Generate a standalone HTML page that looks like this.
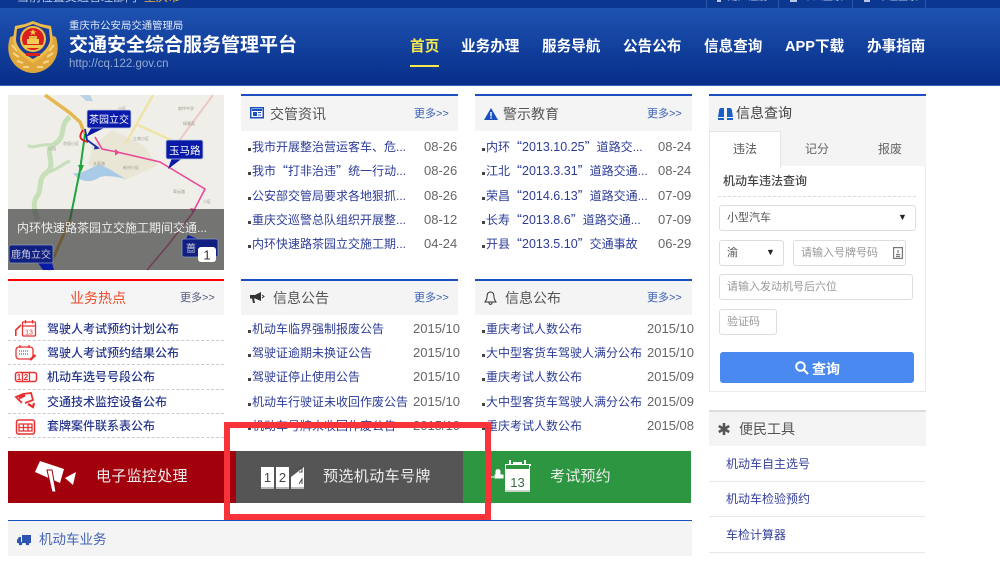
<!DOCTYPE html>
<html lang="zh-CN">
<head>
<meta charset="utf-8">
<title>交通安全综合服务管理平台</title>
<style>
html,body{margin:0;padding:0;background:#fff}
body{width:1000px;height:562px;overflow:hidden;position:relative;font-family:"Liberation Sans","Noto Sans CJK SC",sans-serif;font-size:12px;color:#333;filter:blur(.3px)}
.a{position:absolute;white-space:nowrap}
svg{position:absolute;overflow:visible}
.hd{position:absolute;width:217px;height:35px;background:#f4f4f4}
.ln{position:absolute;height:2px;background:#1a4fc0}
.t{position:absolute;font-size:14px;line-height:20px;color:#555;white-space:nowrap}
.m{position:absolute;font-size:11px;line-height:14px;color:#3d62b5;white-space:nowrap}
.r{position:absolute;font-size:12px;line-height:18px;color:#2d3c97;white-space:nowrap}
.r:before{content:"";position:absolute;left:-4px;top:10px;width:3px;height:3px;background:#444}
.q{font-family:"Noto Sans CJK SC",sans-serif}
.n{font-size:12.5px}
.d{position:absolute;font-size:13px;line-height:18px;color:#666;white-space:nowrap}
.h{position:absolute;left:47px;font-size:12px;line-height:18px;color:#26358c;font-weight:500;white-space:nowrap}
.ds{position:absolute;left:8px;width:216px;border-top:1px dashed #ccc}
.nav{position:absolute;top:37px;font-size:14.6px;line-height:20px;font-weight:700;color:#fff;white-space:nowrap}
.bx{position:absolute;border:1px solid #ddd;border-radius:3px;box-sizing:border-box;background:#fff;color:#999;font-size:11px;line-height:24px;padding-left:7px;white-space:nowrap}
.tool{position:absolute;left:726px;font-size:12px;line-height:16px;color:#35409a;white-space:nowrap}
.tl{position:absolute;left:709px;width:216px;height:1px;background:#e8e8e8}
.bn{position:absolute;top:451px;height:52px}
.bt{position:absolute;font-size:15px;line-height:20px;color:#eee;white-space:nowrap}
</style>
</head>
<body>
<!-- top bar + header -->
<div class="a" style="left:0;top:0;width:1000px;height:8px;background:#0c3790;overflow:hidden">
  <div class="a" style="left:17px;top:-11px;font-size:12px;line-height:16px;color:#b9c7e6">当前位置交通管理部门<span style="color:#f3b53a;margin-left:7px">重庆市</span></div>
  <div class="a" style="left:706px;top:0;width:1px;height:8px;background:#2c56a8"></div>
  <div class="a" style="left:778px;top:0;width:1px;height:8px;background:#2c56a8"></div>
  <div class="a" style="left:852px;top:0;width:1px;height:8px;background:#2c56a8"></div>
  <div class="a" style="left:925px;top:0;width:1px;height:8px;background:#2c56a8"></div>
  <div class="a" style="left:717px;top:0;width:4px;height:2px;background:#b9c7e6"></div>
  <div class="a" style="left:790px;top:0;width:7px;height:2px;background:#b9c7e6"></div>
  <div class="a" style="left:864px;top:0;width:6px;height:2px;background:#b9c7e6"></div>
  <div class="a" style="left:728px;top:-10px;font-size:10px;line-height:16px;color:#b9c7e6">用户注册</div>
  <div class="a" style="left:803px;top:-10px;font-size:10px;line-height:16px;color:#b9c7e6">个人登录</div>
  <div class="a" style="left:878px;top:-10px;font-size:10px;line-height:16px;color:#b9c7e6">单位登录</div>
</div>
<div class="a" style="left:0;top:8px;width:1000px;height:77px;background:linear-gradient(#1e52b2,#072e88)"></div>
<div class="a" style="left:0;top:85px;width:1000px;height:1px;background:#3b66b8"></div>

<!-- emblem -->
<svg style="left:8px;top:21px" width="50" height="52" viewBox="0 0 50 52">
  <path d="M25 52C17 52 8 47 4 40C0 34 -1 26 2 16L8 14L25 30L42 14L48 16C51 26 50 34 46 40C42 47 33 52 25 52Z" fill="#dfa63c"/>
  <path d="M4 24L9 30M5 32L11 36M9 40L15 42M15 46L21 46M46 24L41 30M45 32L39 36M41 40L35 42M35 46L29 46" stroke="#f4d685" stroke-width="2"/>
  <path d="M25 0L33 3L43 5L45 18C45 28 36 36 25 42C14 36 5 28 5 18L7 5L17 3Z" fill="#ecbb48"/>
  <path d="M25 3L33 6L41 8L42 18C42 26 34 33 25 38C16 33 8 26 8 18L9 8L17 6Z" fill="#1c3c9c"/>
  <circle cx="25" cy="18" r="13" fill="#edc04a"/>
  <circle cx="25" cy="18" r="11" fill="#d8201e"/>
  <path d="M25 8l1 2.400h2.400l-2 1.500.8 2.400-2.200-1.500-2.200 1.500.8-2.400-2-1.500h2.400z" fill="#f5d34a"/>
  <rect x="19" y="18" width="12" height="5" fill="#f3cd55"/>
  <rect x="21" y="15" width="8" height="3" fill="#eab93f"/>
  <rect x="16" y="24" width="18" height="3" fill="#f0c84e"/>
  <rect x="18" y="32" width="14" height="3" fill="#d8201e"/>
</svg>

<div class="a" style="left:69px;top:19px;font-size:10.4px;line-height:16px;color:#dfe8f7">重庆市公安局交通管理局</div>
<div class="a" style="left:69px;top:33px;font-size:19px;line-height:26px;font-weight:700;color:#fff">交通安全综合服务管理平台</div>
<div class="a" style="left:69px;top:57px;font-size:11.500px;line-height:15px;color:#94a9d2">http://cq.122.gov.cn</div>

<div class="nav" style="left:410px;color:#f7e84e">首页</div>
<div class="a" style="left:410px;top:65px;width:29px;height:2px;background:#f7e84e"></div>
<div class="nav" style="left:461px">业务办理</div>
<div class="nav" style="left:542px">服务导航</div>
<div class="nav" style="left:623px">公告公布</div>
<div class="nav" style="left:704px">信息查询</div>
<div class="nav" style="left:785px">APP下载</div>
<div class="nav" style="left:867px">办事指南</div>

<!-- map -->
<svg style="left:8px;top:95px" width="216" height="175" viewBox="0 0 216 175">
  <rect width="216" height="175" fill="#efeee8"/>
  <path d="M105 35L135 50L150 70L118 85L80 70L85 50Z" fill="#e9e6d6"/>
  <path d="M62 22C50 30 60 42 45 50C35 55 50 70 38 78C30 84 34 92 30 100C25 105 25 115 30 125" fill="none" stroke="#c5dfb9" stroke-width="5"/>
  <path d="M45 50C30 48 25 55 20 50M38 78C50 75 55 68 62 66" fill="none" stroke="#c5dfb9" stroke-width="3"/>
  <path d="M72 0L82 0L85 6L78 6Z" fill="#b9d3e6"/>
  <path d="M65 78C75 80 85 70 92 70C100 72 110 80 118 84C108 82 100 80 92 82C84 88 72 88 65 78Z" fill="#a9cbe8"/>
  <path d="M37 0L62 18L72 27L77 39" fill="none" stroke="#e4b751" stroke-width="3.500"/>
  <path d="M118 48L145 0M130 30L165 46" fill="none" stroke="#f0e3a8" stroke-width="2.500"/>
  <path d="M168 50L205 0" fill="none" stroke="#edc7c4" stroke-width="2"/>
  <path d="M62 125L40 175" fill="none" stroke="#d9a53a" stroke-width="3"/>
  <g fill="#9a9a8f" font-size="4" font-family="Liberation Sans,Noto Sans CJK SC,sans-serif">
    <text x="85" y="70">长寿路</text><text x="115" y="74">新村小区</text><text x="55" y="50">花园小区</text><text x="165" y="98">翠云路</text><text x="125" y="45">江南小区</text><text x="170" y="15">南坪中学</text><text x="175" y="30">绿景苑</text><text x="40" y="55">公园</text><text x="110" y="15">小区</text><text x="195" y="108">小区</text>
  </g>
  <path d="M77 39L72 75L62 125" fill="none" stroke="#1da73a" stroke-width="2"/>
  <path d="M70 70l3 7 3-7z" fill="#1da73a"/>
  <path d="M75 35C70 42 72 45 80 47" fill="none" stroke="#e01818" stroke-width="1.800"/>
  <path d="M77 34L79 45L90 53" fill="none" stroke="#1c2ba8" stroke-width="1.800"/>
  <path d="M87 50l5 3.500-6 1z" fill="#1c2ba8"/>
  <path d="M87 42L94 54L109 57L152 67L197 94L184 119L160 150L139 175" fill="none" stroke="#e84a98" stroke-width="1.600"/>
  <path d="M107 54l5 3.500-5 3z M182 113l3 6 3-5z" fill="#e84a98"/>
  <rect y="114" width="216" height="61" fill="#3a3a3a" fill-opacity=".68"/>
  <path d="M85 30L78 42L96 33Z M165 60L160 74L176 62Z" fill="#0a1aa8"/>
  <rect x="79" y="15" width="44" height="18" rx="2" fill="#0a1aa8" stroke="#bcd" stroke-width=".8"/>
  <text x="81" y="28" font-size="10" fill="#fff" font-family="Liberation Sans,Noto Sans CJK SC,sans-serif">茶园立交</text>
  <rect x="158" y="45" width="37" height="19" rx="2" fill="#0a1aa8" stroke="#bcd" stroke-width=".8"/>
  <text x="161" y="59" font-size="10.500" fill="#fff" font-family="Liberation Sans,Noto Sans CJK SC,sans-serif">玉马路</text>
  <path d="M30 168L35 175H46L44 168Z M180 140L178 144H190Z" fill="#0a1aa8"/>
  <rect x="1" y="150" width="44" height="18" rx="2" fill="#101f80" stroke="#8899bb" stroke-width=".8"/>
  <text x="3" y="163" font-size="10" fill="#ccd" font-family="Liberation Sans,Noto Sans CJK SC,sans-serif">鹿角立交</text>
  <rect x="174" y="144" width="36" height="18" rx="2" fill="#101f80" stroke="#8899bb" stroke-width=".8"/>
  <text x="178" y="157" font-size="10" fill="#ccd" font-family="Liberation Sans,Noto Sans CJK SC,sans-serif">蔷</text>
  <rect x="190" y="152" width="18" height="15" rx="3" fill="#fff"/>
  <text x="199" y="164.500" font-size="13" text-anchor="middle" fill="#333" font-family="Liberation Sans,sans-serif">1</text>
</svg>
<div class="a" style="left:17px;top:219px;font-size:12px;line-height:18px;color:#eee">内环快速路茶园立交施工期间交通...</div>

<!-- hot list -->
<div class="a" style="left:8px;top:281px;width:216px;height:34px;background:#f5f5f5"></div>
<div class="a" style="left:8px;top:279px;width:216px;height:2px;background:#f00"></div>
<div class="a" style="left:70px;top:288px;font-size:14px;line-height:20px;color:#f0482a">业务热点</div>
<div class="m" style="left:180px;top:291px;color:#555c80">更多&gt;&gt;</div>
<svg style="left:15px;top:319px" width="22" height="118" viewBox="0 0 22 118" fill="none" stroke="#e83232" stroke-width="1.300">
  <rect x="7.500" y="3" width="13" height="14" rx="1"/><path d="M7.500 7H20.500M10.500 1V4.500M17.500 1V4.500"/><path d="M0.800 17V11L6 6" stroke-width="1.600"/>
  <text x="14" y="15.500" font-size="7" fill="#e83232" stroke="none" text-anchor="middle" font-family="Liberation Sans,sans-serif">13</text>
  <rect x="1" y="28" width="17" height="12" rx="3"/><path d="M5 26V29M14 26V29"/><path d="M4 32H14M4 35H14" stroke-dasharray="1 1"/><path d="M15 41L20.500 36" stroke-width="2.500"/>
  <rect x="0.500" y="53.500" width="21" height="9" rx="2" stroke-width="1.500"/><path d="M7.500 54V62M14.500 54V62"/>
  <g font-size="8" fill="#e83232" stroke="none" text-anchor="middle" font-family="Liberation Sans,sans-serif" font-weight="700"><text x="4" y="61">1</text><text x="11" y="61">2</text></g>
  <path d="M7 84L1 78L8 75M8 75L16 74L18 81L10 84" stroke-width="1.800"/><path d="M13 85L18 88L19 84" stroke-width="2.200"/><path d="M4 79L10 76" stroke-width="3"/>
  <rect x="1.500" y="101" width="18" height="14" rx="2" stroke-width="1.500"/><path d="M4 105H17V112H4ZM8.500 105V112M13 105V112M4 108.500H17"/>
</svg>
<div class="h" style="top:320px">驾驶人考试预约计划公布</div>
<div class="h" style="top:344px">驾驶人考试预约结果公布</div>
<div class="h" style="top:368px">机动车选号号段公布</div>
<div class="h" style="top:393px">交通技术监控设备公布</div>
<div class="h" style="top:417px">套牌案件联系表公布</div>
<div class="ds" style="top:340px"></div>
<div class="ds" style="top:364px"></div>
<div class="ds" style="top:389px"></div>
<div class="ds" style="top:413px"></div>
<div class="ds" style="top:437px"></div>

<!-- panel: 交管资讯 -->
<div class="hd" style="left:241px;top:96px"></div>
<div class="ln" style="left:241px;top:94px;width:217px"></div>
<svg style="left:250px;top:107px" width="14" height="12" viewBox="0 0 14 12"><rect x=".75" y=".75" width="12.500" height="10" fill="#fff" stroke="#1a4fc0" stroke-width="1.500"/><rect x="2" y="2" width="10" height="2" fill="#1a4fc0"/><rect x="3" y="5" width="4" height="4" fill="#1a4fc0"/><rect x="8" y="5" width="3" height="1" fill="#1a4fc0"/><rect x="8" y="7.500" width="3" height="1" fill="#1a4fc0"/></svg>
<div class="t" style="left:270px;top:104px">交管资讯</div>
<div class="m" style="left:414px;top:107px">更多&gt;&gt;</div>
<div class="r" style="left:252px;top:138px">我市开展整治营运客车、危...</div><div class="d" style="left:424px;top:138px">08-26</div>
<div class="r" style="left:252px;top:162px">我市<span class="q">“</span>打非治违<span class="q">”</span>统一行动...</div><div class="d" style="left:424px;top:162px">08-26</div>
<div class="r" style="left:252px;top:187px">公安部交管局要求各地狠抓...</div><div class="d" style="left:424px;top:187px">08-26</div>
<div class="r" style="left:252px;top:211px">重庆交巡警总队组织开展整...</div><div class="d" style="left:424px;top:211px">08-12</div>
<div class="r" style="left:252px;top:235px">内环快速路茶园立交施工期...</div><div class="d" style="left:424px;top:235px">04-24</div>

<!-- panel: 警示教育 -->
<div class="hd" style="left:475px;top:96px"></div>
<div class="ln" style="left:475px;top:94px;width:217px"></div>
<svg style="left:484px;top:108px" width="14" height="12" viewBox="0 0 14 12"><path d="M7 0L14 12H0Z" fill="#1a4fc0"/><rect x="6.300" y="4" width="1.400" height="4.500" fill="#fff"/><rect x="6.300" y="9.300" width="1.400" height="1.400" fill="#fff"/></svg>
<div class="t" style="left:503px;top:104px">警示教育</div>
<div class="m" style="left:647px;top:107px">更多&gt;&gt;</div>
<div class="r" style="left:486px;top:138px">内环<span class="q">“</span><span class="n">2013.10.25</span><span class="q">”</span>道路交...</div><div class="d" style="left:658px;top:138px">08-24</div>
<div class="r" style="left:486px;top:162px">江北<span class="q">“</span><span class="n">2013.3.31</span><span class="q">”</span>道路交通...</div><div class="d" style="left:658px;top:162px">08-24</div>
<div class="r" style="left:486px;top:187px">荣昌<span class="q">“</span><span class="n">2014.6.13</span><span class="q">”</span>道路交通...</div><div class="d" style="left:658px;top:187px">07-09</div>
<div class="r" style="left:486px;top:211px">长寿<span class="q">“</span><span class="n">2013.8.6</span><span class="q">”</span>道路交通...</div><div class="d" style="left:658px;top:211px">07-09</div>
<div class="r" style="left:486px;top:235px">开县<span class="q">“</span><span class="n">2013.5.10</span><span class="q">”</span>交通事故</div><div class="d" style="left:658px;top:235px">06-29</div>

<!-- panel: 信息公告 -->
<div class="hd" style="left:241px;top:281px;height:34px"></div>
<div class="ln" style="left:241px;top:279px;width:217px"></div>
<svg style="left:250px;top:292px" width="14" height="12" viewBox="0 0 14 12"><path d="M0 3H5L11 0V9L5 6.500H4L5 11H3L2 6.500H0Z" fill="#333"/><path d="M12 3L14 4.500L12 6" fill="none" stroke="#333"/></svg>
<div class="t" style="left:273px;top:288px">信息公告</div>
<div class="m" style="left:414px;top:291px">更多&gt;&gt;</div>
<div class="r" style="left:252px;top:320px">机动车临界强制报废公告</div><div class="d" style="left:413px;top:320px">2015/10</div>
<div class="r" style="left:252px;top:344px">驾驶证逾期未换证公告</div><div class="d" style="left:413px;top:344px">2015/10</div>
<div class="r" style="left:252px;top:368px">驾驶证停止使用公告</div><div class="d" style="left:413px;top:368px">2015/10</div>
<div class="r" style="left:252px;top:393px">机动车行驶证未收回作废公告</div><div class="d" style="left:413px;top:393px">2015/10</div>
<div class="r" style="left:252px;top:417px">机动车号牌未收回作废公告</div><div class="d" style="left:413px;top:417px">2015/10</div>

<!-- panel: 信息公布 -->
<div class="hd" style="left:475px;top:281px;height:34px"></div>
<div class="ln" style="left:475px;top:279px;width:217px"></div>
<svg style="left:484px;top:291px" width="13" height="14" viewBox="0 0 13 14" fill="none" stroke="#333"><path d="M6.500 1C3.500 1 3 4 3 6C3 9 1.500 10 1 11H12C11.500 10 10 9 10 6C10 4 9.500 1 6.500 1Z"/><path d="M5 11.500C5 14 8 14 8 11.500"/></svg>
<div class="t" style="left:505px;top:288px">信息公布</div>
<div class="m" style="left:647px;top:291px">更多&gt;&gt;</div>
<div class="r" style="left:486px;top:320px">重庆考试人数公布</div><div class="d" style="left:647px;top:320px">2015/10</div>
<div class="r" style="left:486px;top:344px">大中型客货车驾驶人满分公布</div><div class="d" style="left:647px;top:344px">2015/10</div>
<div class="r" style="left:486px;top:368px">重庆考试人数公布</div><div class="d" style="left:647px;top:368px">2015/09</div>
<div class="r" style="left:486px;top:393px">大中型客货车驾驶人满分公布</div><div class="d" style="left:647px;top:393px">2015/09</div>
<div class="r" style="left:486px;top:417px">重庆考试人数公布</div><div class="d" style="left:647px;top:417px">2015/08</div>

<!-- banners -->
<div class="bn" style="left:8px;width:228px;background:#a1000c"></div>
<div class="bn" style="left:236px;width:227px;background:#555"></div>
<div class="bn" style="left:463px;width:228px;background:#2d9640"></div>
<svg style="left:34px;top:460px" width="44" height="34" viewBox="0 0 44 34"><path d="M1 12L6 1L30 9L26 23Z" fill="#fff"/><path d="M13 10L18 10L22 32L18 32Z" fill="#fff" stroke="#a1000c"/><path d="M31 18L42 12L39 25Z" fill="#fff"/></svg>
<div class="bt" style="left:96px;top:467px;letter-spacing:.3px">电子监控处理</div>
<svg style="left:261px;top:465px" width="44" height="25" viewBox="0 0 44 25">
  <rect x="0" y="2" width="13" height="20" fill="#fff"/><rect x="15" y="2" width="13" height="20" fill="#fff"/><rect x="30" y="2" width="13" height="20" fill="#fff"/>
  <rect x="0" y="22" width="13" height="2" fill="#bbb"/><rect x="15" y="22" width="13" height="2" fill="#bbb"/><rect x="30" y="22" width="13" height="2" fill="#bbb"/>
  <path d="M30 12L43 2V0H32L30 2Z" fill="#555"/>
  <g font-family="Liberation Sans,sans-serif" font-size="13" fill="#444" text-anchor="middle"><text x="6.500" y="17">1</text><text x="21.500" y="17">2</text></g>
  <path d="M38 3H41V7H38M38 19L41 14V19" fill="none" stroke="#444"/>
</svg>
<div class="bt" style="left:323px;top:467px;letter-spacing:.4px">预选机动车号牌</div>
<svg style="left:491px;top:460px" width="42" height="32" viewBox="0 0 42 32">
  <path d="M0 17H3M5 15V11.500C5 9 9 9 9 11.500V15H12V18H4V15Z" fill="#fff" stroke="#fff"/>
  <rect x="14" y="5" width="25" height="25" fill="#fff"/><rect x="14" y="30" width="25" height="2" fill="#c7d8c9"/>
  <rect x="14" y="4" width="26" height="2" fill="#fff"/><path d="M19 0V5M34 0V5M22 3H31" stroke="#fff" stroke-width="2"/>
  <rect x="15" y="5" width="23" height="4" fill="#2d9640"/>
  <text x="26.500" y="27" font-family="Liberation Sans,sans-serif" font-size="13" fill="#3a6a44" text-anchor="middle">13</text>
</svg>
<div class="bt" style="left:550px;top:467px;letter-spacing:.2px">考试预约</div>

<!-- bottom panel -->
<div class="a" style="left:8px;top:520px;width:684px;height:1px;background:#1a4fc0"></div>
<div class="a" style="left:8px;top:521px;width:684px;height:35px;background:#f4f4f4"></div>
<svg style="left:17px;top:534px" width="14" height="12" viewBox="0 0 14 12"><path d="M5 1H14V9H5ZM4 3H2L0 6V9H4Z" fill="#2c54b0"/><circle cx="3.500" cy="9.500" r="1.800" fill="#2c54b0"/><circle cx="10.500" cy="9.500" r="1.800" fill="#2c54b0"/></svg>
<div class="a" style="left:39px;top:530px;font-size:13.500px;line-height:20px;color:#4464b4">机动车业务</div>

<!-- red annotation box -->
<div class="a" style="left:224px;top:422px;width:255px;height:86px;border:6px solid #f9333a"></div>

<!-- right: query -->
<div class="a" style="left:709px;top:96px;width:217px;height:71px;background:#f4f4f4"></div>
<div class="ln" style="left:709px;top:94px;width:217px"></div>
<svg style="left:718px;top:108px" width="15" height="12" viewBox="0 0 15 12" fill="#1a5fc8"><path d="M1 3C1 1 2 0 3 0H6V9H0ZM9 0H12C13 0 14 1 14 3L15 9H9Z"/><rect x="0" y="10" width="6" height="2"/><rect x="9" y="10" width="6" height="2"/></svg>
<div class="t" style="left:736px;top:103px;color:#444">信息查询</div>
<div class="a" style="left:709px;top:166px;width:217px;height:226px;box-sizing:border-box;background:#fff;border:1px solid #eaeaea;border-top:0"></div>
<div class="a" style="left:709px;top:131px;width:72px;height:37px;box-sizing:border-box;background:#fff;border:1px solid #e5e5e5;border-bottom:0"></div>
<div class="a" style="left:733px;top:140px;font-size:12px;line-height:18px;color:#555">违法</div>
<div class="a" style="left:805px;top:140px;font-size:12px;line-height:18px;color:#666">记分</div>
<div class="a" style="left:878px;top:140px;font-size:12px;line-height:18px;color:#666">报废</div>
<div class="a" style="left:723px;top:172px;font-size:12px;line-height:18px;font-weight:500;color:#444">机动车违法查询</div>
<div class="a" style="left:718px;top:196px;width:198px;border-top:1px dashed #ddd"></div>
<div class="bx" style="left:719px;top:205px;width:197px;height:26px;color:#555">小型汽车</div>
<div class="a" style="left:898px;top:211px;font-size:9px;line-height:12px;color:#222">▼</div>
<div class="bx" style="left:719px;top:240px;width:65px;height:26px;color:#555">渝</div>
<div class="a" style="left:766px;top:246px;font-size:9px;line-height:12px;color:#222">▼</div>
<div class="bx" style="left:793px;top:240px;width:113px;height:26px">请输入号牌号码</div>
<svg style="left:893px;top:247px" width="10" height="12" viewBox="0 0 10 12" fill="none" stroke="#777" stroke-width="1.200"><rect x=".6" y=".6" width="8.800" height="10.800"/><path d="M3 7.500H7M3 9.500H7M5 3V6"/></svg>
<div class="bx" style="left:719px;top:274px;width:194px;height:26px">请输入发动机号后六位</div>
<div class="bx" style="left:719px;top:309px;width:58px;height:26px">验证码</div>
<div class="a" style="left:720px;top:352px;width:194px;height:31px;background:#4a8af0;border-radius:3px"></div>
<svg style="left:795px;top:361px" width="14" height="14" viewBox="0 0 14 14" fill="none" stroke="#fff" stroke-width="2"><circle cx="5.500" cy="5.500" r="4.300"/><path d="M8.800 8.800L13 13"/></svg>
<div class="a" style="left:812px;top:359px;font-size:14px;line-height:20px;font-weight:700;color:#fff">查询</div>

<!-- right: tools -->
<div class="a" style="left:709px;top:410px;width:217px;height:36px;background:#f4f4f4;border-top:2px solid #ddd;box-sizing:border-box"></div>
<svg style="left:718px;top:423px" width="12" height="12" viewBox="0 0 12 12" stroke="#555" stroke-width="2.600"><path d="M6 0V12M0.800 3L11.200 9M0.800 9L11.200 3"/></svg>
<div class="t" style="left:739px;top:419px">便民工具</div>
<div class="tool" style="top:456px">机动车自主选号</div>
<div class="tl" style="top:481px"></div>
<div class="tool" style="top:491px">机动车检验预约</div>
<div class="tl" style="top:516px"></div>
<div class="tool" style="top:527px">车检计算器</div>
<div class="tl" style="top:552px"></div>
</body>
</html>
